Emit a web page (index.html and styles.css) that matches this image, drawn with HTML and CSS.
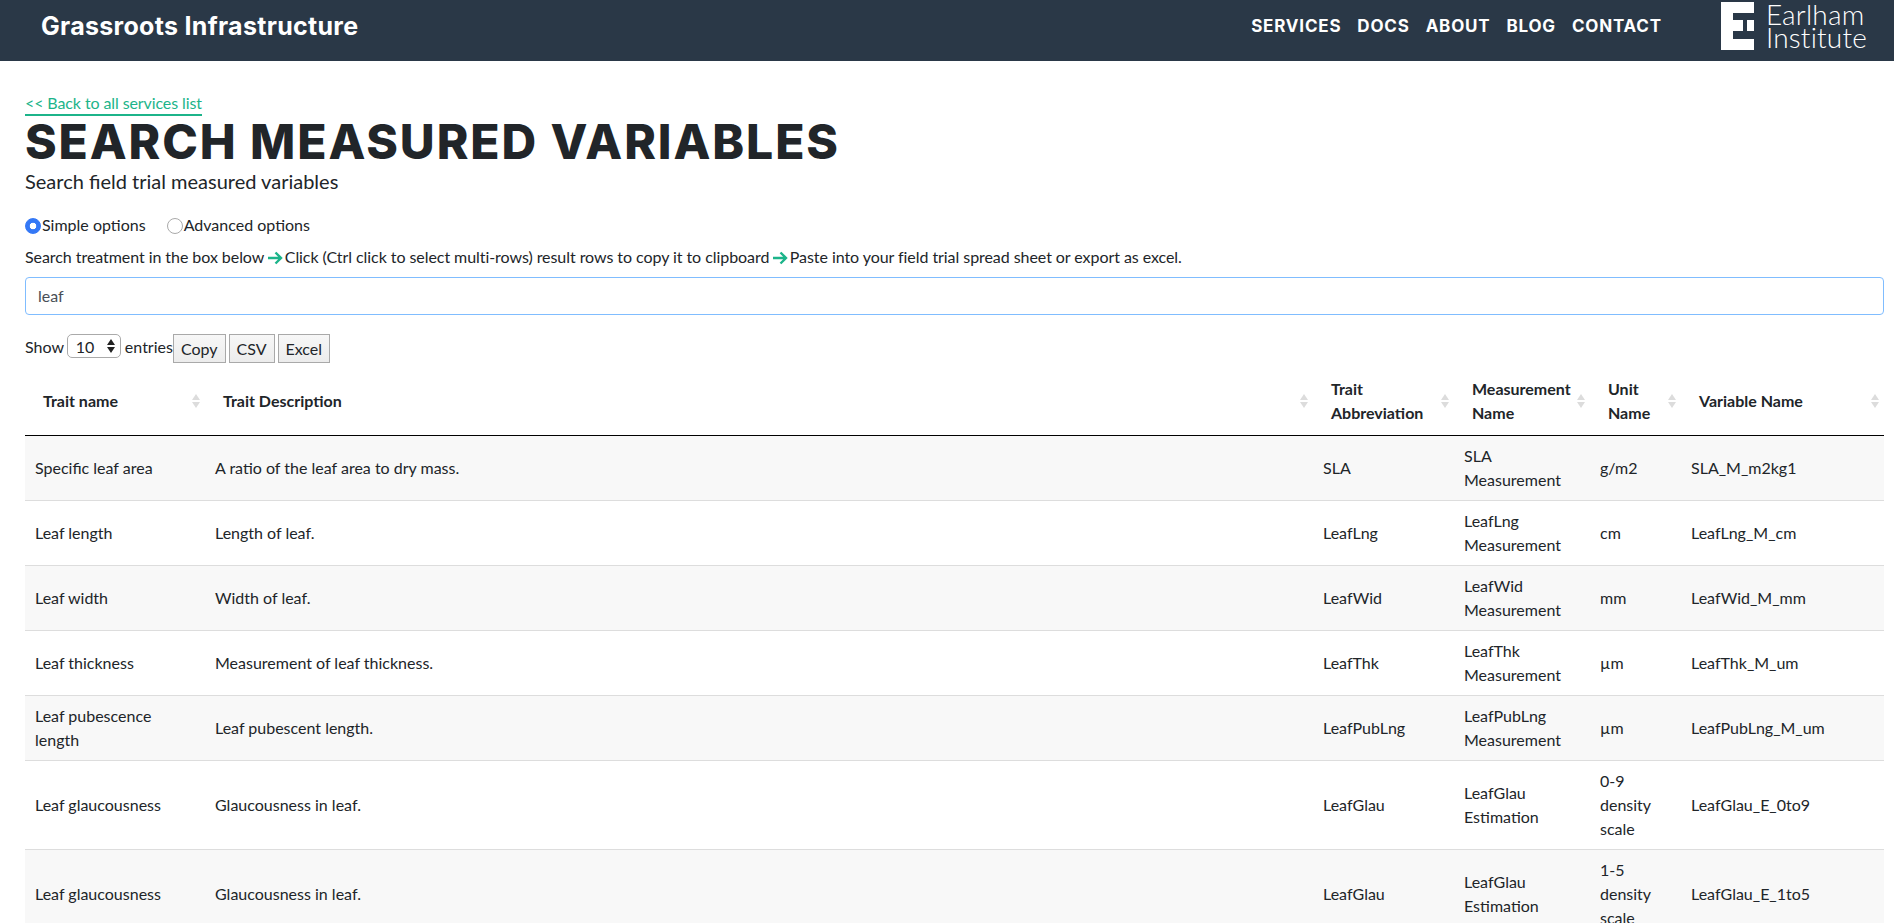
FILE: index.html
```html
<!DOCTYPE html>
<html lang="en">
<head>
  <meta charset="UTF-8" />
  <meta name="viewport" content="width=device-width, initial-scale=1.0"/>
  <title>Search Measured Variables</title>
  <link rel="stylesheet" href="styles.css">
</head>
<body>
  <header class="topbar">
    <a class="brand" href="#">Grassroots Infrastructure</a>
    <nav class="nav">
      <a href="#">Services</a>
      <a href="#">Docs</a>
      <a href="#">About</a>
      <a href="#">Blog</a>
      <a href="#">Contact</a>
    </nav>
    <div class="logo">
      <svg class="logo-mark" viewBox="0 0 33 48" width="33" height="48">
        <path fill="#fff" fill-rule="evenodd" d="M0 0H33V48H0ZM12 11V18H22V29H12V37H33V29H26V18H33V11Z"/>
      </svg>
      <span class="logo-text">Earlham<br>Institute</span>
    </div>
  </header>

  <main class="container">
    <a class="back-link" href="#">&lt;&lt; Back to all services list</a>
    <h1>Search Measured Variables</h1>
    <p class="subtitle">Search field trial measured variables</p>

    <div class="options">
      <label><input type="radio" name="mode" checked />Simple options</label>
      <label><input type="radio" name="mode" />Advanced options</label>
    </div>

    <p class="steps">
      Search treatment in the box below<svg class="arrow" viewBox="0 0 16 14" width="16" height="14"><path d="M1 7H14M8.5 1.5L14 7L8.5 12.5"/></svg>Click (Ctrl click to select multi-rows) result rows to copy it to clipboard<svg class="arrow" viewBox="0 0 16 14" width="16" height="14"><path d="M1 7H14M8.5 1.5L14 7L8.5 12.5"/></svg>Paste into your field trial spread sheet or export as excel.
    </p>

    <input class="search" type="text" value="leaf" />

    <div class="table-tools">
      <label class="length">Show <select><option>10</option><option>25</option><option>50</option></select> entries</label>
      <div class="buttons">
        <button>Copy</button>
        <button>CSV</button>
        <button>Excel</button>
      </div>
    </div>

    <table class="results">
      <colgroup>
        <col class="col-name"><col class="col-desc"><col class="col-abbr"><col class="col-meas"><col class="col-unit"><col class="col-var">
      </colgroup>
      <thead>
        <tr>
          <th>Trait name</th>
          <th>Trait Description</th>
          <th>Trait Abbreviation</th>
          <th>Measurement Name</th>
          <th>Unit Name</th>
          <th>Variable Name</th>
        </tr>
      </thead>
      <tbody>
        <tr>
          <td>Specific leaf area</td>
          <td>A ratio of the leaf area to dry mass.</td>
          <td>SLA</td>
          <td>SLA Measurement</td>
          <td>g/m2</td>
          <td>SLA_M_m2kg1</td>
        </tr>
        <tr>
          <td>Leaf length</td>
          <td>Length of leaf.</td>
          <td>LeafLng</td>
          <td>LeafLng Measurement</td>
          <td>cm</td>
          <td>LeafLng_M_cm</td>
        </tr>
        <tr>
          <td>Leaf width</td>
          <td>Width of leaf.</td>
          <td>LeafWid</td>
          <td>LeafWid Measurement</td>
          <td>mm</td>
          <td>LeafWid_M_mm</td>
        </tr>
        <tr>
          <td>Leaf thickness</td>
          <td>Measurement of leaf thickness.</td>
          <td>LeafThk</td>
          <td>LeafThk Measurement</td>
          <td>µm</td>
          <td>LeafThk_M_um</td>
        </tr>
        <tr>
          <td>Leaf pubescence length</td>
          <td>Leaf pubescent length.</td>
          <td>LeafPubLng</td>
          <td>LeafPubLng Measurement</td>
          <td>µm</td>
          <td>LeafPubLng_M_um</td>
        </tr>
        <tr>
          <td>Leaf glaucousness</td>
          <td>Glaucousness in leaf.</td>
          <td>LeafGlau</td>
          <td>LeafGlau Estimation</td>
          <td>0-9 density scale</td>
          <td>LeafGlau_E_0to9</td>
        </tr>
        <tr>
          <td>Leaf glaucousness</td>
          <td>Glaucousness in leaf.</td>
          <td>LeafGlau</td>
          <td>LeafGlau Estimation</td>
          <td>1-5 density scale</td>
          <td>LeafGlau_E_1to5</td>
        </tr>
      </tbody>
    </table>
  </main>
</body>
</html>
```

FILE: styles.css
```css
body {
  font-family: "Lato", "Liberation Sans", sans-serif;
  font-size: 16px;
  line-height: 24px;
  color: #212529;
  background-color: #fff;
  margin: 0;
}

a {
  text-decoration: none;
}

.topbar {
  box-sizing: border-box;
  height: 61px;
  background-color: #2a3847;
  display: flex;
  align-items: center;
  padding: 0 27px 10px 41px;
}

.brand {
  font-family: "Inter", "Liberation Sans", sans-serif;
  font-size: 25px;
  font-weight: 700;
  color: #fff;
  letter-spacing: 0.3px;
  margin-right: auto;
}

.nav {
  display: flex;
  gap: 16px;
  margin-right: 59px;
}

.nav a {
  font-family: "Inter", "Liberation Sans", sans-serif;
  font-size: 17px;
  font-weight: 700;
  color: #fff;
  text-transform: uppercase;
  letter-spacing: 0.8px;
}

.logo {
  display: flex;
  align-items: center;
  gap: 12px;
  color: #fff;
  align-self: flex-start;
  padding-top: 2px;
}

.logo-text {
  font-family: "Lato", sans-serif;
  font-size: 28px;
  font-weight: 300;
  line-height: 23px;
  letter-spacing: 0.2px;
  margin-top: -1px;
}

.container {
  padding: 30px 10px 0 25px;
}

.back-link {
  display: inline-block;
  color: #1cb48a;
  border-bottom: 2px solid #1cb48a;
  line-height: 20px;
  height: 20px;
  padding-bottom: 1px;
  letter-spacing: -0.1px;
}

h1 {
  font-family: "Inter", "Liberation Sans", sans-serif;
  font-size: 48px;
  font-weight: 800;
  line-height: 51px;
  letter-spacing: 1.9px;
  text-transform: uppercase;
  margin: 0;
}

.subtitle {
  font-size: 20px;
  line-height: 30px;
  margin: -1px 0 17px;
}

.options {
  display: flex;
  gap: 21px;
  margin-bottom: 8px;
}

.options label {
  display: flex;
  align-items: center;
}

.options input {
  appearance: none;
  box-sizing: border-box;
  width: 16px;
  height: 16px;
  margin: 2px 1px 0 0;
  background-color: #fff;
  border: 1px solid #aaa;
  border-radius: 50%;
}

.options input:checked {
  border-color: #3478f6;
  background: radial-gradient(circle, #fff 0 3px, #3478f6 3.6px);
}

.steps {
  margin: 0 0 8px;
  white-space: nowrap;
  letter-spacing: -0.06px;
}

.arrow {
  vertical-align: -2px;
  margin: 0 2px 0 2.5px;
}

.arrow path {
  fill: none;
  stroke: #1cb48a;
  stroke-width: 2.4;
}

.search {
  display: block;
  box-sizing: border-box;
  width: 100%;
  height: 38px;
  padding: 5px 12px 7px;
  font: inherit;
  color: #495057;
  border: 1px solid #80bdff;
  border-radius: 4px;
  outline: none;
}

.table-tools {
  display: flex;
  align-items: flex-start;
  margin-top: 19px;
}

.length select {
  appearance: none;
  box-sizing: border-box;
  width: 54px;
  height: 24px;
  margin-left: -1px;
  padding: 0 0 0 8px;
  font: inherit;
  color: #212529;
  border: 1px solid #aaa;
  border-radius: 5px;
  background: #fff url("data:image/svg+xml,%3Csvg xmlns='http://www.w3.org/2000/svg' width='8' height='14'%3E%3Cpath d='M4 0L8 6H0ZM4 14L0 8H8Z' fill='%23222'/%3E%3C/svg%3E") no-repeat right 5px center;
}

.buttons {
  display: flex;
  gap: 3px;
}

.buttons button {
  height: 29px;
  padding: 0 7px;
  font: inherit;
  color: #212529;
  background: linear-gradient(#f7f7f7, #ececec);
  border: 1px solid #a9a9a9;
}

.results {
  width: 100%;
  table-layout: fixed;
  border-collapse: collapse;
  margin-top: 4px;
}

.col-name { width: 180px; }
.col-desc { width: 1108px; }
.col-abbr { width: 141px; }
.col-meas { width: 136px; }
.col-unit { width: 91px; }
.col-var { width: 203px; }

.results th {
  position: relative;
  padding: 10px 18px;
  text-align: left;
  font-weight: 700;
  border-bottom: 1px solid #000;
}

/* sort arrows */
.results th::before,
.results th::after {
  content: "";
  position: absolute;
  right: 5px;
  border-left: 4px solid transparent;
  border-right: 4px solid transparent;
}

.results th::before {
  top: 50%;
  margin-top: -7px;
  border-bottom: 6px solid #dcdcdc;
}

.results th::after {
  top: 50%;
  margin-top: 1px;
  border-top: 6px solid #dcdcdc;
}

.results td {
  padding: 8px 10px;
  border-bottom: 1px solid #ddd;
}

.results tbody tr:nth-child(odd) {
  background-color: #f8f8f8;
}
```
